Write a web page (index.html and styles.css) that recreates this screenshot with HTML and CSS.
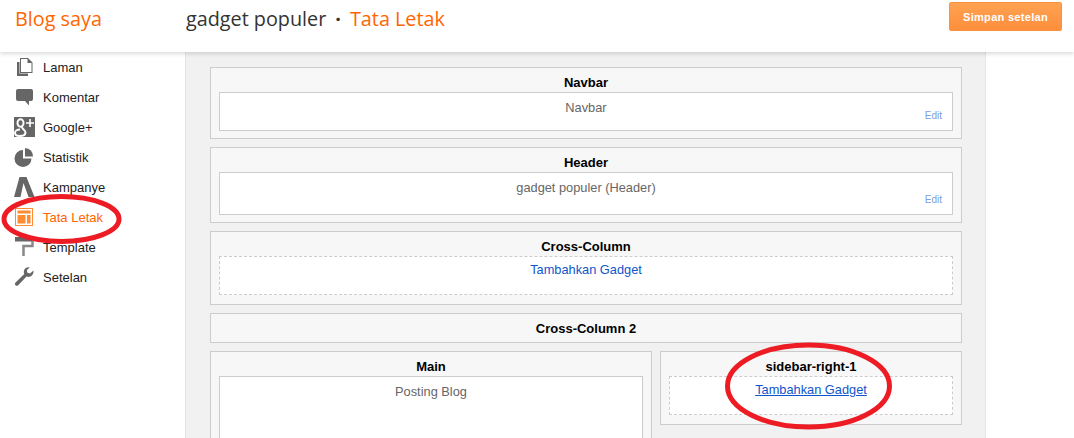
FILE: index.html
```html
<!DOCTYPE html>
<html lang="id">
<head>
<meta charset="utf-8">
<title>Tata Letak</title>
<link rel="stylesheet" href="styles.css">
</head>
<body>
<header class="topbar">
  <div class="brand">Blog saya</div>
  <div class="crumbs"><span class="blog-name">gadget populer</span><span class="dot">·</span><span class="page-name">Tata Letak</span></div>
  <button class="save">Simpan setelan</button>
</header>
<div class="body-row">
  <nav class="side">
    <a class="item">
      <svg class="ico" viewBox="0 0 20 20"><path fill="#666" d="M3 5h2.500v11.500H14V19H3z"/><path fill="#666" fill-rule="evenodd" d="M6 1h8l4.500 4.500V16H6zM7 2v13h10.500V6H13.500V2z"/></svg>
      <span>Laman</span>
    </a>
    <a class="item">
      <svg class="ico" viewBox="0 0 20 20"><path fill="#666" d="M4 2h13q2 0 2 2v8q0 2-2 2h-2v4.500L11 14H4q-2 0-2-2V4q0-2 2-2z"/></svg>
      <span>Komentar</span>
    </a>
    <a class="item">
      <svg class="ico ico-wide" viewBox="0 0 21 20"><rect width="21" height="20" fill="#666"/><ellipse cx="6.500" cy="6" rx="3" ry="3.800" fill="none" stroke="#fff" stroke-width="2"/><path d="M8 10c0 2 3.500 3 3.500 5.500S8.500 19 5.500 19 1 17.500 1 15.800s2-3.300 5-3.300" fill="none" stroke="#fff" stroke-width="2"/><path d="M16 2v8M12 6h8" stroke="#fff" stroke-width="1.600"/></svg>
      <span>Google+</span>
    </a>
    <a class="item">
      <svg class="ico" viewBox="0 0 20 20"><path fill="#666" d="M9 3v8.500h8.500A8.500 8.500 0 1 1 9 3z"/><path fill="#666" d="M11 1a8 8 0 0 1 8 8.500h-8z"/></svg>
      <span>Statistik</span>
    </a>
    <a class="item">
      <svg class="ico ico-wide" viewBox="0 0 21 20"><path fill="#666" d="M5.500 0h7l8 20h-6L9.500 6 6.500 20H0z"/></svg>
      <span>Kampanye</span>
    </a>
    <a class="item active">
      <svg class="ico" viewBox="0 0 20 20"><path fill="#ff8b33" fill-rule="evenodd" d="M1 1h18v18H1zM2 2v16h16V2z"/><path fill="#ff8b33" d="M3.500 3.500h13v3h-13zM3.500 8h8v8.500h-8zM13 8h3.500v8.500H13z"/></svg>
      <span>Tata Letak</span>
    </a>
    <a class="item">
      <svg class="ico" viewBox="0 0 20 20"><path fill="none" stroke="#888" stroke-width="2.500" d="M9.500 19V9h9V4"/><path fill="#666" d="M1 0h17v4.500H1z"/></svg>
      <span>Template</span>
    </a>
    <a class="item">
      <svg class="ico" viewBox="0 0 20 20"><path fill="#666" d="M19.500 3.500l-3.500 3-2.500-.8-.7-2.400 3-3c-3.500-.5-6 1.500-6 4.500 0 .8.100 1.500.5 2.300L1.500 15.500c-1 1-.7 2 0 2.700s1.700 1 2.700 0l8.300-8.700c3.800 1.500 7.500-1.500 7-6z"/></svg>
      <span>Setelan</span>
    </a>
  </nav>
  <main class="canvas">
    <section class="sec">
      <h3>Navbar</h3>
      <div class="slot short"><p>Navbar</p><a class="edit">Edit</a></div>
    </section>
    <section class="sec">
      <h3>Header</h3>
      <div class="slot high"><p>gadget populer (Header)</p><a class="edit">Edit</a></div>
    </section>
    <section class="sec sec-dash">
      <h3>Cross-Column</h3>
      <div class="slot dashed"><a class="add">Tambahkan Gadget</a></div>
    </section>
    <section class="sec empty">
      <h3>Cross-Column 2</h3>
    </section>
    <div class="cols">
      <section class="sec main-col">
        <h3>Main</h3>
        <div class="slot posts"><p>Posting Blog</p></div>
      </section>
      <section class="sec sec-dash side-col">
        <h3>sidebar-right-1</h3>
        <div class="slot dashed"><a class="add under">Tambahkan Gadget</a></div>
      </section>
    </div>
  </main>
</div>
<svg class="marks" width="1074" height="438" viewBox="0 0 1074 438">
  <ellipse cx="61.500" cy="219" rx="57.500" ry="22.500" fill="none" stroke="#ed1c24" stroke-width="5"/>
  <ellipse cx="808.500" cy="386" rx="81" ry="41" fill="none" stroke="#ed1c24" stroke-width="5"/>
</svg>
</body>
</html>
```

FILE: styles.css
```css
* { box-sizing: border-box; }
html, body { margin: 0; height: 438px; overflow: hidden; background: #fff; }
body { font-family: "Liberation Sans", Arial, sans-serif; position: relative; }

.topbar {
  height: 52px;
  display: flex;
  align-items: flex-start;
  background: #fff;
  box-shadow: 0 2px 4px rgba(0, 0, 0, .14);
  position: relative;
  z-index: 2;
}
.brand {
  width: 186px;
  padding: 6px 0 0 15px;
  font: 19.8px/26px "Open Sans", sans-serif;
  color: #f60;
}
.crumbs {
  flex: 1;
  padding-top: 6px;
  font: 19.8px/26px "Open Sans", sans-serif;
  color: #333;
}
.dot { margin: 0 9px 0 9px; font-weight: 700; }
.page-name { color: #f60; }
.save {
  width: 113px;
  height: 29px;
  margin: 2px 12px 0 0;
  border: 1px solid #f9923f;
  border-radius: 2px;
  background: linear-gradient(#ffa252, #fe8e3c);
  color: #fff;
  font: 700 11px "Liberation Sans", Arial, sans-serif;
  letter-spacing: .3px;
  padding: 0;
}

.body-row { display: flex; height: 386px; }
.side { width: 185px; }
.item {
  display: flex;
  align-items: center;
  height: 30px;
  padding-left: 14px;
  font-size: 13px;
  color: #222;
  gap: 9px;
}
.item.active { color: #f60; }
.ico { width: 20px; height: 20px; flex: none; }
.ico-wide { width: 21px; margin-right: -1px; }

.canvas {
  width: 801px;
  background: #f1f1f1;
  border-left: 1px solid #e5e5e5;
  border-right: 1px solid #e5e5e5;
  padding: 15px 23px 0 24px;
  display: flex;
  flex-direction: column;
  gap: 8px;
}
.sec {
  flex: none;
  background: #f7f7f7;
  border: 1px solid #ccc;
  padding: 0 8px 7px;
}
.sec-dash { padding-bottom: 9px; }
.sec h3 {
  margin: 0;
  height: 24px;
  font-size: 13px;
  line-height: 29px;
  text-align: center;
  color: #000;
}
.slot {
  position: relative;
  background: #fff;
  border: 1px solid #ccc;
  text-align: center;
  font-size: 12.8px;
  color: #666;
}
.slot p { margin: 0; line-height: 29px; }
.short { height: 39px; }
.high { height: 43px; }
.slot.dashed { height: 39px; border-style: dashed; }
.sec.empty { height: 30px; padding: 0; }
.edit {
  position: absolute;
  right: 10px;
  bottom: 7px;
  font-size: 10px;
  line-height: 14px;
  color: #7ba0dc;
}
.add { display: block; line-height: 26px; color: #15c; }
.add.under { text-decoration: underline; }

.cols { display: flex; gap: 8px; align-items: flex-start; flex: none; }
.main-col { width: 442px; height: 87px; flex: none; padding-bottom: 0; border-bottom: 0; }
.side-col { flex: 1; }
.posts { height: 62px; border-bottom: 0; }

.marks { position: absolute; left: 0; top: 0; z-index: 3; pointer-events: none; }
```
